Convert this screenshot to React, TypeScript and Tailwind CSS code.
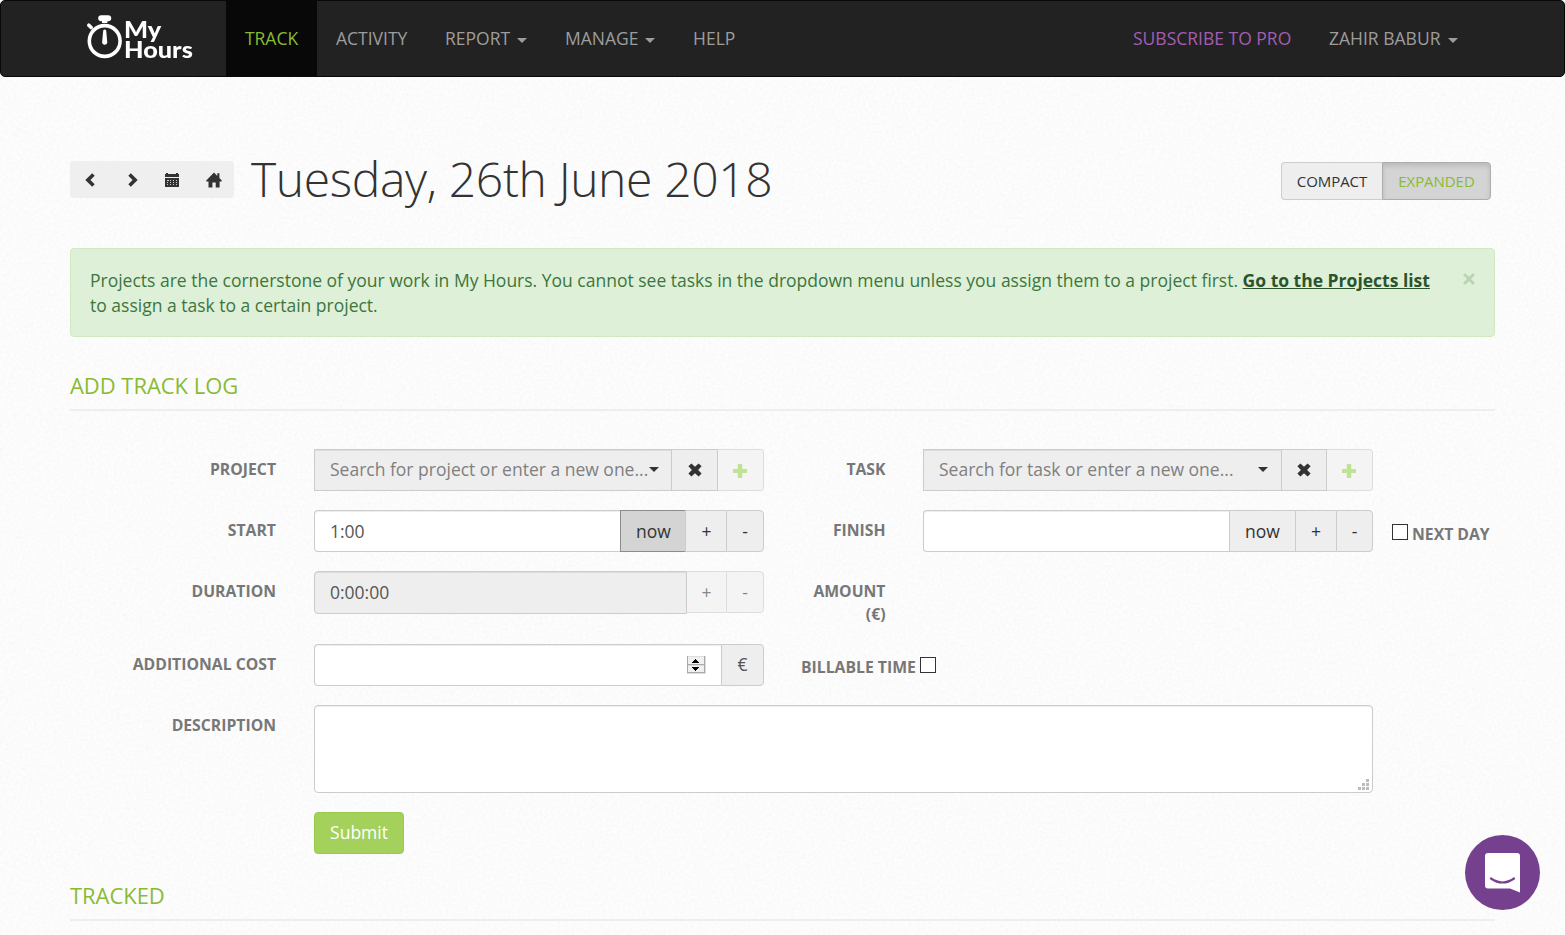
import type { ReactNode } from "react";

const Caret = ({ className = "" }: { className?: string }) => (
  <svg className={`h-[5px] w-[10px] shrink-0 ${className}`} viewBox="0 0 10 5" fill="currentColor">
    <path d="M0 0H10L5 5Z" />
  </svg>
);

const Remove = () => (
  <svg className="size-[14px]" viewBox="0 0 14 14" fill="currentColor">
    <path d="M3.4 .4 7 3.8 10.6 .4 13.6 3.3 10.1 7 13.6 10.6 10.6 13.5 7 10.2 3.4 13.5 .4 10.6 3.9 7 .4 3.3Z" />
  </svg>
);

const Plus = () => (
  <svg className="mt-[2px] mr-[2px] size-[14px]" viewBox="0 0 14 14" fill="#bfe294">
    <path d="M5.3 0H8.7Q9.2 0 9.2.5V5H13.5Q14 5 14 5.5V8.5Q14 9 13.5 9H9.2V13.5Q9.2 14 8.7 14H5.3Q4.8 14 4.8 13.5V9H.5Q0 9 0 8.5V5.5Q0 5 .5 5H4.8V.5Q4.8 0 5.3 0Z" />
  </svg>
);

const Chevron = ({ flip = false }: { flip?: boolean }) => (
  <svg className={flip ? "h-[14px] w-[10px] -scale-x-100" : "h-[14px] w-[10px]"} viewBox="0 0 10 14" fill="currentColor">
    <path d="M7.2 .3 9.7 2.7 5.4 7 9.7 11.3 7.2 13.7 .3 7Z" />
  </svg>
);

const Calendar = () => (
  <svg className="h-[16px] w-[14px]" viewBox="0 0 14 16" fill="currentColor" shapeRendering="crispEdges">
    <path d="M0 2H1V1H3V2H11V1H13V2H14V5H0ZM0 6H14V15H0Z" />
    <path
      d="M2 8H4V9H2ZM5 8H6V9H5ZM8 8H9V9H8ZM11 8H12V9H11ZM2 10H3V11H2ZM5 10H6V11H5ZM8 10H9V11H8ZM11 10H12V11H11ZM2 12H3V13H2ZM5 12H6V13H5ZM8 12H9V13H8ZM11 12H12V13H11Z"
      fill="#c8c8c8"
    />
  </svg>
);

const Home = () => (
  <svg className="h-[16px] w-[16px]" viewBox="0 0 16 16" fill="currentColor">
    <path d="M8 .6 11.3 3.9V1.2H13.4V6L16 8.7 15.5 9.4H13.6V15.4H9.7V10.6H6.4V15.4H2.5V9.4H.5L0 8.7Z" />
  </svg>
);

const Logo = () => (
  <div className="flex h-[46px] w-[112px]">
    <svg className="h-[46px] w-[38px] shrink-0" viewBox="0 0 38 46" fill="none">
      <circle cx="18.7" cy="28" r="15.4" stroke="#fff" strokeWidth="3.6" />
      <rect x="12.2" y="2.2" width="13" height="6" rx="3" fill="#fff" />
      <path d="M16 6H21.4V10H16Z" fill="#fff" />
      <path d="M2.8 12.2 5.2 14.6" stroke="#fff" strokeWidth="3.6" strokeLinecap="round" />
      <path d="M17.2 17.5Q18.7 15.5 20.2 17.5L21.2 28.5A2.6 2.6 0 1 1 16.2 28.5Z" fill="#fff" />
    </svg>
    <div className="origin-left scale-x-110 pt-[6px] font-['Lato',sans-serif] text-[23px] leading-[20px] font-black text-white">
      <div>My</div>
      <div>Hours</div>
    </div>
  </div>
);

const Label = ({ children, className = "w-[207px] pr-px" }: { children: ReactNode; className?: string }) => (
  <div className={`shrink-0 pt-[9px] text-right text-[15.75px] leading-[23px] font-bold text-[#777] ${className}`}>
    {children}
  </div>
);

const addonTones = {
  normal: "border-[#ccc] bg-[#eee] text-[#333]",
  pressed: "border-[#8c8c8c] bg-[#d4d4d4] text-[#333]",
  disabled: "border-[#ddd] bg-[#f4f4f4] text-[#888]",
  unit: "border-[#ccc] bg-[#eee] text-[#555]",
};

const Addon = ({
  children,
  tone = "normal",
  className = "",
}: {
  children: ReactNode;
  tone?: keyof typeof addonTones;
  className?: string;
}) => (
  <button className={`flex h-[42px] shrink-0 items-center justify-center border ${addonTones[tone]} ${className}`}>{children}</button>
);

const field = "h-[42px] shrink-0 border border-[#ccc] px-[15px] leading-[40px] text-[#555] shadow-[inset_0_1px_1px_rgba(0,0,0,0.075)]";

const SearchBox = ({
  text,
  boxClass,
  caretClass,
  clearClass,
}: {
  text: string;
  boxClass: string;
  caretClass: string;
  clearClass: string;
}) => (
  <div className="flex w-[450px] shrink-0">
    <div className={`${field} flex items-center bg-[#eee] ${boxClass}`}>
      <span className="-mt-[2px] whitespace-nowrap text-[#808080]">{text}</span>
      <Caret className={`-mt-[2px] ml-auto text-[#333] ${caretClass}`} />
    </div>
    <Addon className={`-ml-px ${clearClass}`}>
      <Remove />
    </Addon>
    <Addon tone="disabled" className="w-[46px] rounded-r-[4px] border-l-0">
      <Plus />
    </Addon>
  </div>
);

const SectionTitle = ({ children }: { children: ReactNode }) => (
  <h2 className="h-[40px] border-b-2 border-[#eee] text-[22px] leading-[28px] tracking-[-0.05px] text-[#88bb33]">{children}</h2>
);

const CheckSquare = () => <span className="size-[16px] shrink-0 border border-[#333] bg-white" />;

export default function App() {
  return (
    <div className="relative isolate h-[935px] w-[1565px] overflow-hidden bg-[#fdfdfd] font-['Open_Sans',sans-serif] text-[17.5px] leading-[25px] text-[#333]">
      <svg className="absolute inset-0 -z-10 h-full w-full opacity-[0.08]">
        <filter id="paper">
          <feTurbulence type="fractalNoise" baseFrequency="0.35" numOctaves="3" stitchTiles="stitch" />
          <feColorMatrix values="0 0 0 0 0.4  0 0 0 0 0.4  0 0 0 0 0.4  1.5 0 0 0 -0.5" />
        </filter>
        <rect width="100%" height="100%" filter="url(#paper)" />
      </svg>

      <nav className="flex h-[77px] rounded-[5px] border border-[#080808] bg-[#222] leading-[75px] whitespace-nowrap text-[#9d9d9d]">
        <div className="w-[225px] shrink-0 pt-[12px] pl-[85px]">
          <Logo />
        </div>
        <a className="w-[91px] bg-[#080808] text-center text-[#88bb33]">TRACK</a>
        <a className="w-[109px] pl-[19px]">ACTIVITY</a>
        <a className="flex w-[120px] items-center pl-[19px]">
          REPORT <Caret className="mt-[4px] ml-[7px]" />
        </a>
        <a className="flex w-[128px] items-center pl-[19px]">
          MANAGE <Caret className="mt-[4px] ml-[6px]" />
        </a>
        <a className="pl-[19px]">HELP</a>
        <div className="ml-auto flex w-[431px] items-center">
          <a className="w-[196px] text-[#a35db0]">SUBSCRIBE TO PRO</a>
          <a className="flex items-center">
            ZAHIR BABUR <Caret className="mt-[4px] ml-[8px]" />
          </a>
        </div>
      </nav>

      <main className="px-[70px]">
        <header className="flex h-[171px] pt-[84px]">
          <div className="flex h-[37px] w-[164px] items-center rounded-[4px] bg-[#efefef]">
            <button className="ml-[15px]"><Chevron /></button>
            <button className="ml-[33px]"><Chevron flip /></button>
            <button className="ml-[27px]"><Calendar /></button>
            <button className="ml-[27px]"><Home /></button>
          </div>
          <h1 className="-mt-[15px] ml-[17px] text-[48px] leading-[66px] font-light tracking-[-0.36px] whitespace-nowrap">Tuesday, 26th June 2018</h1>
          <div className="mt-px mr-[4px] ml-auto flex h-[38px] text-[15px] leading-[36px] tracking-[-0.05px]">
            <button className="w-[101px] rounded-l-[4px] border border-r-0 border-[#ccc] bg-[#eee]">COMPACT</button>
            <button className="w-[109px] rounded-r-[4px] border border-[#adadad] bg-[#d4d4d4] text-[#88bb33] shadow-[inset_0_3px_5px_rgba(0,0,0,0.125)]">EXPANDED</button>
          </div>
        </header>

        <div className="flex h-[89px] rounded-[4px] border border-[#d0e9c0] bg-[#dff0d8] pt-[19px] pl-[19px] text-[#3c763d]">
          <p className="w-[1361px]">
            <span className="block whitespace-nowrap">
              Projects are the cornerstone of your work in My Hours. You cannot see tasks in the dropdown menu unless you assign them to a project first.{" "}
              <a className="font-bold text-[#2b542c] underline">Go to the Projects list</a>
            </span>
            <span className="block">to assign a task to a certain project.</span>
          </p>
          <svg className="mt-[5px] ml-[12px] size-[12px] shrink-0" viewBox="0 0 12 12">
            <path d="M1.1 1.1 10.9 10.9M10.9 1.1 1.1 10.9" stroke="#b9d4b3" strokeWidth="2.8" />
          </svg>
        </div>

        <div className="pt-[34px]">
          <SectionTitle>ADD TRACK LOG</SectionTitle>
        </div>

        <form className="flex flex-col pt-[38px]">
          <div className="flex h-[61px]">
            <Label>PROJECT</Label>
            <div className="ml-[37px] flex">
              <SearchBox text="Search for project or enter a new one..." boxClass="w-[358px]" caretClass="-mr-[3px]" clearClass="w-[47px]" />
            </div>
            <Label className="w-[122px] pr-[0.5px]">TASK</Label>
            <div className="ml-[37px] flex">
              <SearchBox text="Search for task or enter a new one..." boxClass="w-[359px]" caretClass="-mr-[2px]" clearClass="w-[46px]" />
            </div>
          </div>

          <div className="flex h-[61px]">
            <Label>START</Label>
            <div className="ml-[37px] flex w-[450px] shrink-0">
              <div className={`${field} w-[306px] rounded-l-[4px] border-r-0 bg-white`}>1:00</div>
              <Addon tone="pressed" className="w-[65px] border-r-0 pl-px">now</Addon>
              <Addon className="w-[41px] border-r-0 pl-px">+</Addon>
              <Addon className="w-[38px] rounded-r-[4px]">-</Addon>
            </div>
            <Label className="w-[122px] pr-[0.5px]">FINISH</Label>
            <div className="ml-[37px] flex w-[450px] shrink-0">
              <div className={`${field} w-[306px] rounded-l-[4px] border-r-0 bg-white`} />
              <Addon className="w-[66px] border-r-0">now</Addon>
              <Addon className="w-[41px] border-r-0">+</Addon>
              <Addon className="w-[37px] rounded-r-[4px]">-</Addon>
            </div>
            <div className="ml-[19px] flex pt-[14px]">
              <CheckSquare />
              <span className="-mt-px ml-[4px] text-[15.75px] leading-[23px] font-bold whitespace-nowrap text-[#777]">NEXT DAY</span>
            </div>
          </div>

          <div className="flex h-[73px]">
            <Label>DURATION</Label>
            <div className="ml-[37px] flex w-[450px] shrink-0">
              <div className="h-[43px] w-[373px] shrink-0 rounded-l-[4px] border border-[#ccc] bg-[#eee] px-[15px] leading-[41px] text-[#555] shadow-[inset_0_1px_1px_rgba(0,0,0,0.075)]">0:00:00</div>
              <Addon tone="disabled" className="w-[39px] border-x-0">+</Addon>
              <Addon tone="disabled" className="w-[38px] rounded-r-[4px]">-</Addon>
            </div>
            <Label className="w-[122px] pr-[0.5px] pl-[40px]">AMOUNT (€)</Label>
          </div>

          <div className="flex h-[61px]">
            <Label>ADDITIONAL COST</Label>
            <div className="ml-[37px] flex w-[450px] shrink-0">
              <div className={`${field} flex w-[407px] items-center justify-end rounded-l-[4px] border-r-0 bg-white`}>
                <svg className="h-[18px] w-[19px]" viewBox="0 0 19 18" shapeRendering="crispEdges">
                  <path d="M0 0H19V18H0Z" fill="#ddd" />
                  <path d="M1 1H17V8H1ZM1 10H17V16H1Z" fill="#f0f0f0" />
                  <path d="M0 8H18V9H0ZM0 16H18V17H0ZM0 0H1V17H0ZM17 0H18V17H17Z" fill="#aaa" />
                  <path d="M5 7H12V6H11V5H10V4H9V3H8V4H7V5H6V6H5ZM5 11H12V12H11V13H10V14H9V15H8V14H7V13H6V12H5Z" fill="#000" />
                </svg>
              </div>
              <Addon tone="unit" className="w-[43px] rounded-r-[4px] pb-px">€</Addon>
            </div>
            <div className="ml-[37px] flex pt-[13px]">
              <span className="-mt-px mr-[4px] text-[15.75px] leading-[23px] font-bold whitespace-nowrap text-[#777]">BILLABLE TIME</span>
              <CheckSquare />
            </div>
          </div>

          <div className="flex h-[107px]">
            <Label>DESCRIPTION</Label>
            <div className="ml-[37px] flex h-[88px] w-[1059px] items-end justify-end rounded-[4px] border border-[#ccc] bg-white pr-[3px] pb-[2px] shadow-[inset_0_1px_1px_rgba(0,0,0,0.075)]">
              <svg className="size-[11px]" viewBox="0 0 11 11" fill="#bbb" shapeRendering="crispEdges">
                <path d="M8 0H11V3H8ZM4 4H7V7H4ZM8 4H11V7H8ZM0 8H3V11H0ZM4 8H7V11H4ZM8 8H11V11H8Z" />
              </svg>
            </div>
          </div>

          <button className="ml-[244px] h-[42px] w-[90px] rounded-[4px] border border-[#98cb4c] bg-[#a3d15c] pb-[2px] text-white">Submit</button>
        </form>

        <div className="pt-[27px]">
          <SectionTitle>TRACKED</SectionTitle>
        </div>
      </main>

      <button className="absolute top-[835px] left-[1465px] flex size-[75px] items-center justify-center rounded-full bg-[#75418f]">
        <svg className="size-[75px]" viewBox="0 0 75 75">
          <path d="M23 18H52Q55 18 55 21V57.5L45 53.5H23Q20 53.5 20 50.5V21Q20 18 23 18Z" fill="#fff" />
          <path d="M26 43.5Q37.5 51.5 49 43.5" fill="none" stroke="#75418f" strokeWidth="2.2" strokeLinecap="round" />
        </svg>
      </button>
    </div>
  );
}
